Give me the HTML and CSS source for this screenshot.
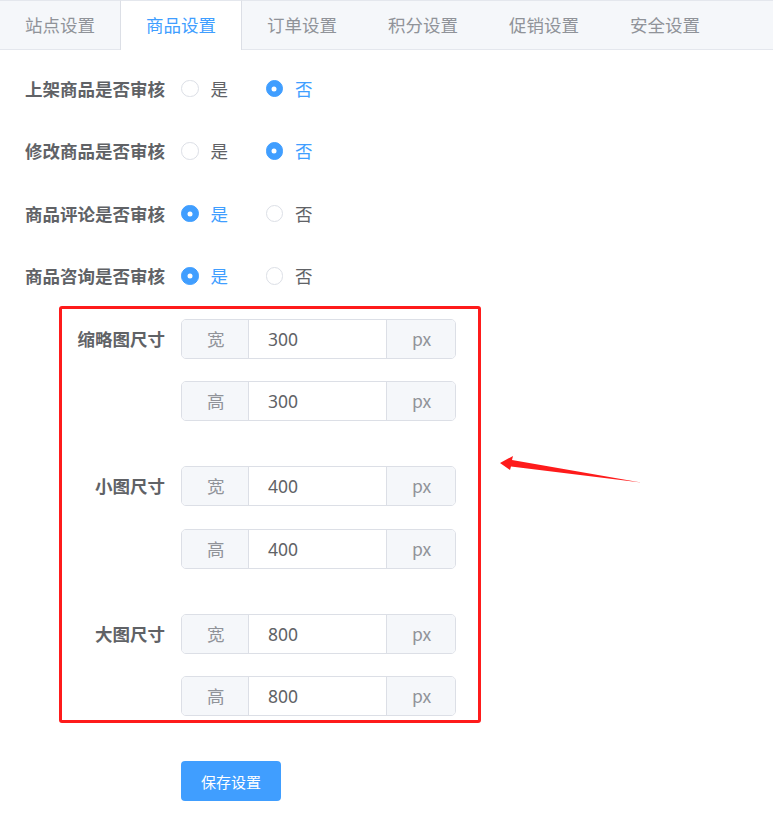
FILE: index.html
```html
<!DOCTYPE html>
<html lang="zh-CN">
<head>
    <meta charset="UTF-8">
    <title>商品设置</title>
    <link rel="stylesheet" href="styles.css">
</head>
<body>
    <div class="page">
        <!-- 选项卡 -->
        <div class="tabs">
            <div class="tab">站点设置</div>
            <div class="tab active">商品设置</div>
            <div class="tab">订单设置</div>
            <div class="tab">积分设置</div>
            <div class="tab">促销设置</div>
            <div class="tab">安全设置</div>
        </div>

        <div class="form">
            <div class="form-item">
                <label class="form-label">上架商品是否审核</label>
                <div class="radio-group">
                    <span class="radio"><span class="radio-dot"></span>是</span>
                    <span class="radio checked"><span class="radio-dot"></span>否</span>
                </div>
            </div>
            <div class="form-item">
                <label class="form-label">修改商品是否审核</label>
                <div class="radio-group">
                    <span class="radio"><span class="radio-dot"></span>是</span>
                    <span class="radio checked"><span class="radio-dot"></span>否</span>
                </div>
            </div>
            <div class="form-item">
                <label class="form-label">商品评论是否审核</label>
                <div class="radio-group">
                    <span class="radio checked"><span class="radio-dot"></span>是</span>
                    <span class="radio"><span class="radio-dot"></span>否</span>
                </div>
            </div>
            <div class="form-item">
                <label class="form-label">商品咨询是否审核</label>
                <div class="radio-group">
                    <span class="radio checked"><span class="radio-dot"></span>是</span>
                    <span class="radio"><span class="radio-dot"></span>否</span>
                </div>
            </div>

            <!-- 图片尺寸 -->
            <div class="form-item size-item">
                <label class="form-label">缩略图尺寸</label>
                <div class="size-inputs">
                    <div class="input-group"><span class="addon">宽</span><span class="input">300</span><span class="addon">px</span></div>
                    <div class="input-group"><span class="addon">高</span><span class="input">300</span><span class="addon">px</span></div>
                </div>
            </div>
            <div class="form-item size-item">
                <label class="form-label">小图尺寸</label>
                <div class="size-inputs">
                    <div class="input-group"><span class="addon">宽</span><span class="input">400</span><span class="addon">px</span></div>
                    <div class="input-group"><span class="addon">高</span><span class="input">400</span><span class="addon">px</span></div>
                </div>
            </div>
            <div class="form-item size-item">
                <label class="form-label">大图尺寸</label>
                <div class="size-inputs">
                    <div class="input-group"><span class="addon">宽</span><span class="input">800</span><span class="addon">px</span></div>
                    <div class="input-group"><span class="addon">高</span><span class="input">800</span><span class="addon">px</span></div>
                </div>
            </div>

            <div class="form-item">
                <span class="form-label"></span>
                <button class="btn-primary">保存设置</button>
            </div>
        </div>

        <!-- 标注 -->
        <div class="mark-box"></div>
        <svg class="mark-arrow" width="150" height="40" viewBox="0 0 150 40">
            <polygon points="5,13 18,6 17,10 146,32.5 16,16.5 15,20" fill="#fe1b1b"/>
        </svg>
    </div>
</body>
</html>
```

FILE: styles.css
```css
* {
    margin: 0;
    padding: 0;
    box-sizing: border-box;
}

body {
    font-family: "Noto Sans CJK SC", "Noto Sans", sans-serif;
    background: #fff;
    color: #606266;
    font-size: 17.5px;
}

.page {
    position: relative;
    min-height: 823px;
}

/* 选项卡 */
.tabs {
    display: flex;
    height: 50px;
    background: #f5f7fa;
    border-top: 1px solid #e4e7ed;
    border-bottom: 1px solid #e4e7ed;
}

.tab {
    height: 49px;
    line-height: 48px;
    padding: 0 25px;
    margin-left: -1px;
    margin-top: -1px;
    border: 1px solid transparent;
    border-bottom: none;
    color: #909399;
    white-space: nowrap;
}

.tab.active {
    background: #fff;
    color: #409eff;
    border-left-color: #dcdfe6;
    border-right-color: #dcdfe6;
    border-top-color: #e4e7ed;
    height: 50px;
}

/* 表单 */
.form {
    padding-top: 18.5px;
}

.form-item {
    display: flex;
    margin-bottom: 22.5px;
}

.form-label {
    width: 181px;
    flex-shrink: 0;
    padding-right: 16px;
    text-align: right;
    line-height: 40px;
    font-weight: bold;
    color: #606266;
}

.radio-group {
    display: flex;
    align-items: center;
    height: 40px;
}

.radio {
    display: flex;
    align-items: center;
    margin-right: 37.5px;
    color: #606266;
    line-height: 1;
}

.radio-dot {
    width: 17.5px;
    height: 17.5px;
    border: 1px solid #dcdfe6;
    border-radius: 50%;
    background: #fff;
    margin-right: 12px;
    position: relative;
}

.radio.checked {
    color: #409eff;
}

.radio.checked .radio-dot {
    background: #409eff;
    border-color: #409eff;
}

.radio.checked .radio-dot::after {
    content: "";
    position: absolute;
    width: 5px;
    height: 5px;
    border-radius: 50%;
    background: #fff;
    left: 50%;
    top: 50%;
    transform: translate(-50%, -50%);
}

/* 尺寸输入 */
.size-inputs {
    display: flex;
    flex-direction: column;
    gap: 22.5px;
    padding-bottom: 22.5px;
}

.input-group {
    display: flex;
    width: 275px;
    height: 40px;
    border: 1px solid #dcdfe6;
    border-radius: 5px;
    overflow: hidden;
}

.addon {
    background: #f5f7fa;
    color: #909399;
    padding: 0 25px;
    line-height: 38px;
    white-space: nowrap;
}

.addon:first-child {
    width: 67px;
    border-right: 1px solid #dcdfe6;
}

.addon:last-child {
    width: 69px;
    border-left: 1px solid #dcdfe6;
    padding: 0 0 0 25px;
}

.input {
    flex: 1;
    padding-left: 19px;
    line-height: 38px;
    color: #606266;
    font-family: "Noto Sans", "Noto Sans CJK SC", sans-serif;
}

.btn-primary {
    width: 100px;
    height: 40px;
    background: #409eff;
    border: none;
    border-radius: 4px;
    color: #fff;
    font-family: inherit;
    font-size: 15px;
}

/* 标注框和箭头 */
.mark-box {
    position: absolute;
    left: 59px;
    top: 306px;
    width: 422px;
    height: 417px;
    border: 3px solid #fe1b1b;
    border-radius: 3px;
}

.mark-arrow {
    position: absolute;
    left: 495px;
    top: 450px;
}
```
